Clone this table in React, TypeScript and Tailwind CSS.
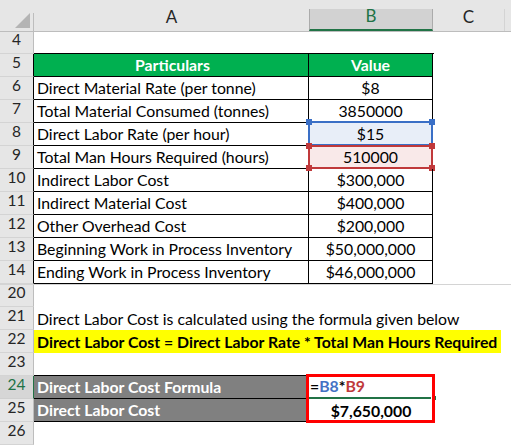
import React from "react";

const font = { fontFamily: "Lato, 'Noto Sans', sans-serif" };

function RowHead({ n, active, border }: { n: string; active?: boolean; border?: string }) {
  return (
    <div
      className={
        "w-[34px] shrink-0 flex items-end justify-center pb-[2px] border-r text-[15.5px] " +
        (active
          ? "bg-[#d6d6d6] text-[#217346] border-r-[#217346] border-b border-b-[#cfcfcf]"
          : "bg-[#e6e6e6] text-[#262626] border-b border-b-[#d4d4d4] ") +
        (border ?? (active ? "" : " border-r-[#bdbdbd]"))
      }
    >
      {n}
    </div>
  );
}

function TableRow({
  n,
  a,
  b,
  head,
  overlay,
}: {
  n: string;
  a: string;
  b: string;
  head?: boolean;
  overlay?: React.ReactNode;
}) {
  return (
    <div className="flex h-[23px]">
      <RowHead n={n} border=" border-r-black" />
      <div
        className={
          "w-[275px] shrink-0 border-r border-b border-black flex items-end pl-[3px] pb-[1px] text-[15.8px] leading-[20px] whitespace-nowrap " +
          (head ? "bg-[#00b050] text-white font-bold justify-center" : "text-black")
        }
      >
        {a}
      </div>
      <div
        className={
          "relative w-[124px] shrink-0 border-r border-b border-black flex items-end justify-center pb-[1px] text-[15.8px] leading-[20px] " +
          (head ? "bg-[#00b050] text-white font-bold" : "text-black")
        }
      >
        {overlay}
        <span className="relative">{b}</span>
      </div>
      <div className="flex-1" />
    </div>
  );
}

function Handle({ pos, color }: { pos: string; color: string }) {
  return <div className={"absolute w-[6px] h-[6px] " + pos + " " + color} />;
}

export default function App() {
  const tableRows = [
    ["6", "Direct Material Rate (per tonne)", "$8"],
    ["7", "Total Material Consumed (tonnes)", "3850000"],
    ["8", "Direct Labor Rate (per hour)", "$15"],
    ["9", "Total Man Hours Required (hours)", "510000"],
    ["10", "Indirect Labor Cost", "$300,000"],
    ["11", "Indirect Material Cost", "$400,000"],
    ["12", "Other Overhead Cost", "$200,000"],
    ["13", "Beginning Work in Process Inventory", "$50,000,000"],
    ["14", "Ending Work in Process Inventory", "$46,000,000"],
  ];

  return (
    <div className="w-[511px] h-[445px] overflow-hidden bg-white relative" style={font}>
      {/* column headers */}
      <div className="flex h-[32px] bg-[#e6e6e6] border-b border-[#bdbdbd] text-[17px] text-[#262626]">
        <div className="w-[34px] shrink-0 relative border-r border-[#bdbdbd] mt-[13px]">
          <svg className="absolute left-[14px] top-[0px]" width="16" height="15" viewBox="0 0 16 15">
            <polygon points="16,0 16,15 1,15" fill="#b4b4b4" />
          </svg>
        </div>
        <div className="w-[275px] shrink-0 flex items-end justify-center pb-[2px] mt-[9px]">A</div>
        <div className="w-[124px] shrink-0 flex items-end justify-center pb-[1px] mt-[9px] bg-[#d2d2d2] border-x border-[#ababab] border-b-2 border-b-[#217346] text-[#217346]">
          B
        </div>
        <div className="w-[72px] shrink-0 flex items-end justify-center pb-[2px] mt-[9px] border-r border-[#d4d4d4]">C</div>
        <div className="flex-1" />
      </div>

      {/* row 4 */}
      <div className="flex h-[22px]">
        <RowHead n="4" />
        <div className="w-[275px] shrink-0 border-b border-black" />
        <div className="w-[125px] shrink-0 border-b border-black" />
        <div className="flex-1" />
      </div>

      <TableRow n="5" a="Particulars" b="Value" head />
      {tableRows.map(([n, a, b]) => (
        <TableRow
          key={n}
          n={n}
          a={a}
          b={b}
          overlay={
            n === "8" ? (
              <div className="absolute left-[-1px] top-[-2px] w-[125px] h-[25px] border-2 border-[#3a6fc6] bg-[#e8eef8]">
                <Handle pos="left-[-4px] top-[-4px]" color="bg-[#3a6fc6]" />
                <Handle pos="right-[-4px] top-[-4px]" color="bg-[#3a6fc6]" />
              </div>
            ) : n === "9" ? (
              <div className="absolute left-[-1px] top-[-1px] w-[125px] h-[24px] border-2 border-[#c0393b] bg-[#f9e9e9]">
                <Handle pos="left-[-4px] top-[-4px]" color="bg-[#c0393b]" />
                <Handle pos="right-[-4px] top-[-4px]" color="bg-[#c0393b]" />
                <Handle pos="left-[-4px] bottom-[-4px]" color="bg-[#c0393b]" />
                <Handle pos="right-[-4px] bottom-[-4px]" color="bg-[#c0393b]" />
              </div>
            ) : undefined
          }
        />
      ))}

      {/* row 20 - rows 15 to 19 are hidden */}
      <div className="flex h-[23px] border-t border-[#d4d4d4]">
        <RowHead n="20" />
        <div className="flex-1" />
      </div>

      {/* row 21 */}
      <div className="flex h-[23px]">
        <RowHead n="21" />
        <div className="flex-1 flex items-end pl-[3px] pb-[1px] text-[15.8px] leading-[20px] text-black whitespace-nowrap">
          Direct Labor Cost is calculated using the formula given below
        </div>
      </div>

      {/* row 22 */}
      <div className="flex h-[23px]">
        <RowHead n="22" />
        <div className="w-[467px] shrink-0 bg-[#ffff00] flex items-end pl-[3px] pb-[1px] text-[15.8px] leading-[20px] font-bold text-black whitespace-nowrap overflow-hidden">
          Direct Labor Cost = Direct Labor Rate * Total Man Hours Required
        </div>
        <div className="flex-1" />
      </div>

      {/* row 23 */}
      <div className="flex h-[23px]">
        <RowHead n="23" />
        <div className="w-[275px] shrink-0 border-b border-black" />
        <div className="flex-1" />
      </div>

      {/* row 24 */}
      <div className="flex h-[23px]">
        <RowHead n="24" active />
        <div className="w-[275px] shrink-0 bg-[#808080] border-r border-b border-black flex items-end pl-[3px] pb-[1px] text-[15.8px] leading-[20px] font-bold text-white">
          Direct Labor Cost Formula
        </div>
        <div className="relative w-[124px] shrink-0 border-b-2 border-[#217346] flex items-end pl-[1px] pb-[1px] text-[15.8px] leading-[20px] font-bold">
          <span className="text-black">=</span>
          <span className="text-[#4472c4]">B8</span>
          <span className="text-black">*</span>
          <span className="text-[#c0393b]">B9</span>
          <div className="absolute right-[-4px] bottom-[-4px] w-[6px] h-[6px] bg-[#217346] border border-white" />
        </div>
        <div className="flex-1" />
      </div>

      {/* row 25 */}
      <div className="flex h-[23px]">
        <RowHead n="25" />
        <div className="w-[275px] shrink-0 bg-[#808080] border-r border-b border-black flex items-end pl-[3px] pb-[1px] text-[15.8px] leading-[20px] font-bold text-white">
          Direct Labor Cost
        </div>
        <div className="w-[124px] shrink-0 flex items-end justify-center pb-[1px] text-[15.8px] leading-[20px] font-bold text-black">
          $7,650,000
        </div>
        <div className="flex-1" />
      </div>

      {/* row 26 */}
      <div className="flex h-[23px]">
        <RowHead n="26" />
        <div className="flex-1" />
      </div>

      {/* red highlight box around B24:B25 */}
      <div className="absolute left-[306px] top-[374px] w-[129px] h-[49px] border-[3px] border-[#ff0000] pointer-events-none" />
    </div>
  );
}
